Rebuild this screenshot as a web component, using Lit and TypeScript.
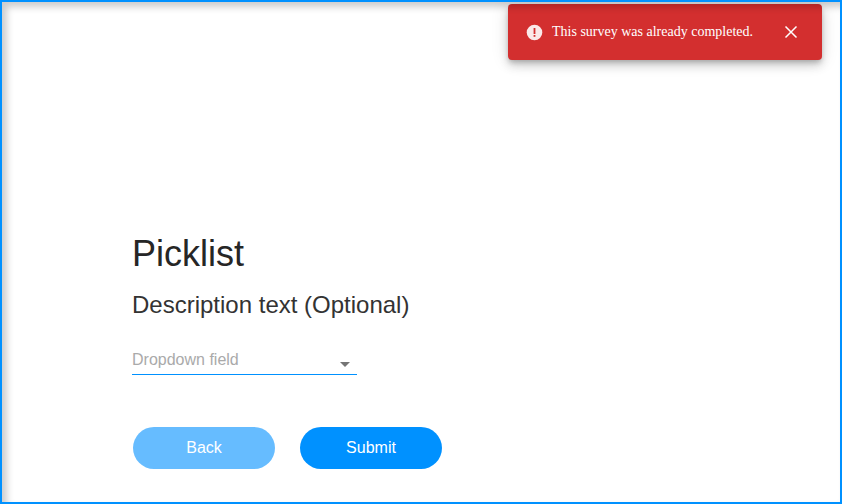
import { LitElement, html, css } from "lit";
import { customElement } from "lit/decorators.js";

@customElement("app-root")
export class AppRoot extends LitElement {
  static styles = css`
    :host {
      display: block;
      width: 842px;
      height: 504px;
    }
    * {
      box-sizing: border-box;
    }
    .frame {
      position: relative;
      width: 842px;
      height: 504px;
      border: 2px solid #0091ff;
      background: #fff;
      overflow: hidden;
      font-family: "Liberation Sans", Arial, sans-serif;
    }
    .edge {
      position: absolute;
      inset: 0;
      pointer-events: none;
      box-shadow: inset 5px 5px 7px 0 rgba(0, 0, 0, 0.2);
    }
    .content {
      display: flex;
      flex-direction: column;
      align-items: flex-start;
      padding: 232px 0 0 130px;
    }
    h1 {
      margin: 0;
      font-size: 36px;
      line-height: 40px;
      font-weight: 400;
      color: #262626;
    }
    .desc {
      margin: 17px 0 0;
      font-size: 24px;
      line-height: 28px;
      color: #333;
    }
    .field {
      display: flex;
      justify-content: space-between;
      align-items: center;
      width: 225px;
      height: 27px;
      margin-top: 29px;
      padding: 0 7px 2px 0;
      border-bottom: 1px solid #0091ff;
      font-size: 16px;
      color: #aaa;
    }
    .caret {
      width: 0;
      height: 0;
      margin-top: 8px;
      border-left: 5px solid transparent;
      border-right: 5px solid transparent;
      border-top: 5px solid #757575;
    }
    .actions {
      display: flex;
      gap: 25px;
      margin: 52px 0 0 1px;
    }
    button {
      width: 142px;
      height: 42px;
      border: 0;
      border-radius: 21px;
      background: #0091ff;
      color: #fff;
      font: 16px "Liberation Sans", Arial, sans-serif;
      padding: 0;
    }
    button.back {
      background: #66bcff;
    }
    .toast {
      position: absolute;
      top: 2px;
      left: 506px;
      display: flex;
      align-items: center;
      width: 314px;
      height: 56px;
      padding: 0 24px 0 18px;
      border-radius: 4px;
      background: #d32f2f;
      box-shadow: 0 3px 5px -1px rgba(0, 0, 0, 0.2), 0 6px 10px 0 rgba(0, 0, 0, 0.14),
        0 1px 18px 0 rgba(0, 0, 0, 0.12);
      color: #fff;
      font-family: "Liberation Serif", "Times New Roman", serif;
      font-size: 14px;
    }
    .toast span {
      flex: 1;
      margin-left: 9px;
    }
    .toast svg {
      display: block;
    }
  `;

  render() {
    return html`
      <div class="frame">
        <div class="content">
          <h1>Picklist</h1>
          <p class="desc">Description text (Optional)</p>
          <div class="field">
            Dropdown field
            <i class="caret"></i>
          </div>
          <div class="actions">
            <button class="back">Back</button>
            <button>Submit</button>
          </div>
        </div>
        <div class="toast">
          <svg width="17" height="17" viewBox="0 0 17 17">
            <circle cx="8.5" cy="8.5" r="7.8" fill="#fbe9e9"></circle>
            <rect x="7.6" y="4" width="1.8" height="6" fill="#d32f2f"></rect>
            <rect x="7.6" y="11" width="1.8" height="1.8" fill="#d32f2f"></rect>
          </svg>
          <span>This survey was already completed.</span>
          <svg width="14" height="14" viewBox="0 0 14 14">
            <path d="M1.5 1.5l11 11M12.5 1.5l-11 11" stroke="#fff" stroke-width="1.5" fill="none"></path>
          </svg>
        </div>
        <div class="edge"></div>
      </div>
    `;
  }
}
